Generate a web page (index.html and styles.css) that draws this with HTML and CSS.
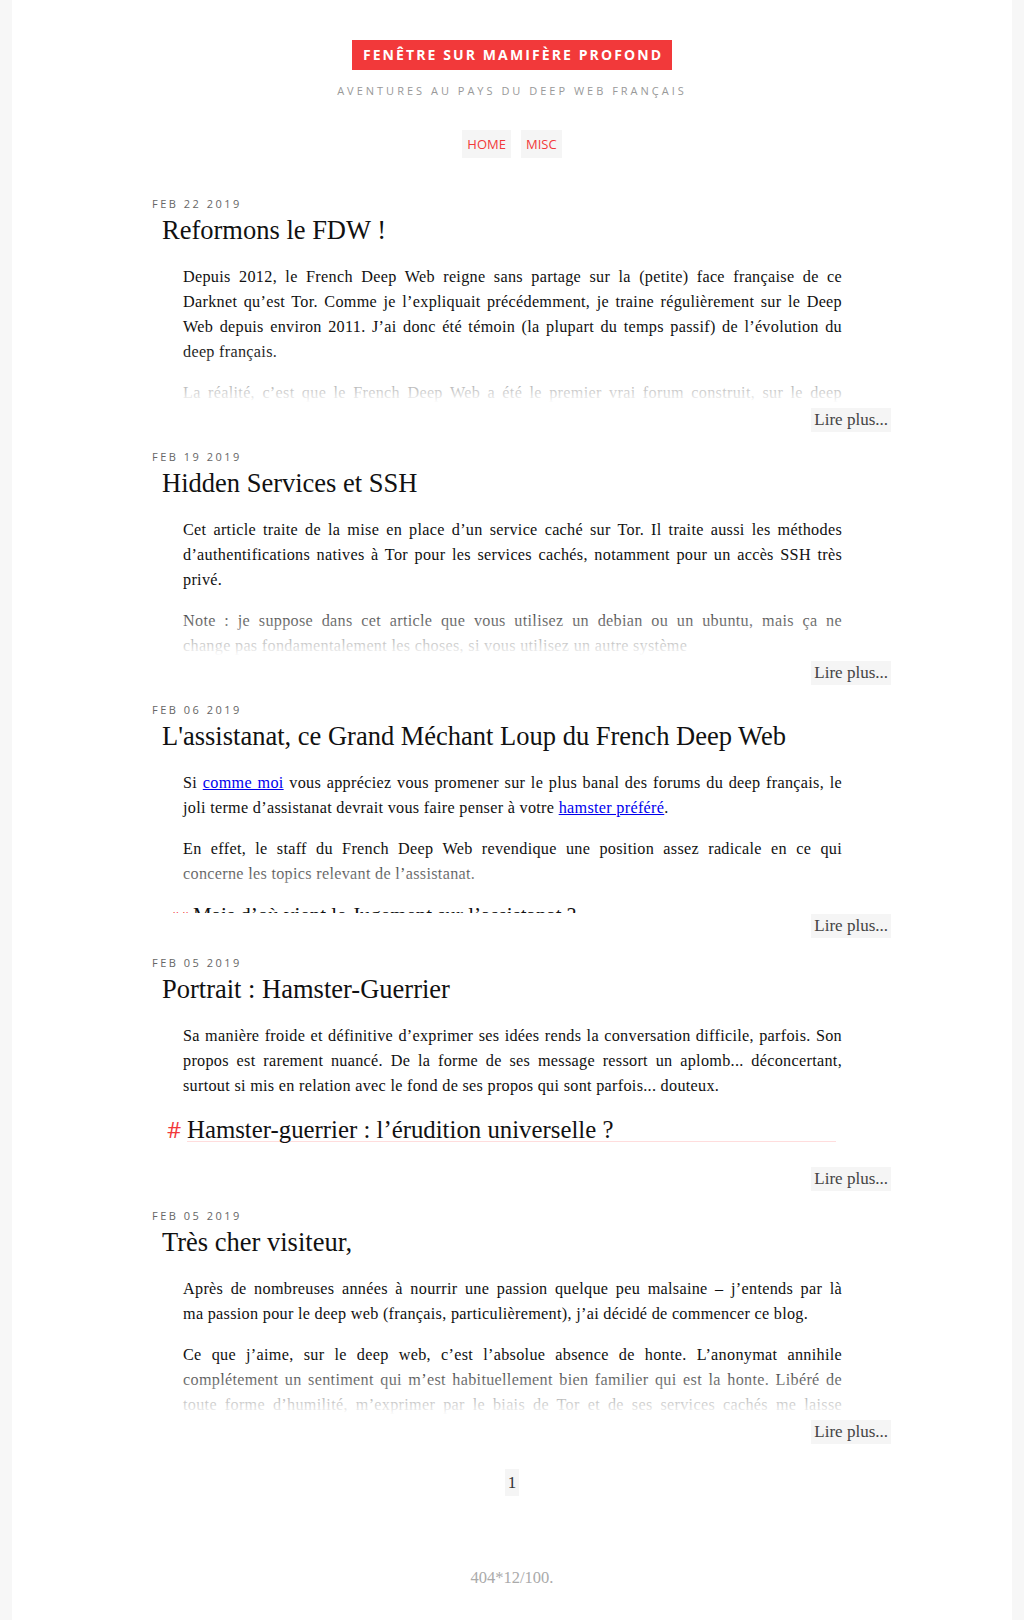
FILE: index.html
```html
<!DOCTYPE html>
<html lang="fr">
<head>
<meta charset="utf-8">
<title>Fenêtre sur Mamifère Profond</title>
<link rel="stylesheet" href="styles.css">
</head>
<body>
<div class="page">
  <header class="site-header">
    <h1 class="site-title"><a href="#">Fenêtre sur Mamifère Profond</a></h1>
    <p class="tagline">Aventures au pays du deep web français</p>
    <nav class="site-nav">
      <a href="#">Home</a>
      <a href="#">Misc</a>
    </nav>
  </header>

  <main class="posts">
    <article class="post">
      <time class="post-date">Feb 22 2019</time>
      <h2 class="post-title">Reformons le FDW !</h2>
      <div class="excerpt">
        <p>
          <span class="ln">Depuis 2012, le French Deep Web reigne sans partage sur la (petite) face française de ce</span>
          <span class="ln">Darknet qu’est Tor. Comme je l’expliquait précédemment, je traine régulièrement sur le Deep</span>
          <span class="ln">Web depuis environ 2011. J’ai donc été témoin (la plupart du temps passif) de l’évolution du</span>
          <span class="ln">deep français.</span>
        </p>
        <p>
          <span class="ln">La réalité, c’est que le French Deep Web a été le premier vrai forum construit, sur le deep</span>
          <span class="ln">web français, à rassembler une communauté réellement active.</span>
        </p>
      </div>
      <div class="read-more-row"><a class="read-more" href="#">Lire plus...</a></div>
    </article>

    <article class="post">
      <time class="post-date">Feb 19 2019</time>
      <h2 class="post-title">Hidden Services et SSH</h2>
      <div class="excerpt">
        <p>
          <span class="ln">Cet article traite de la mise en place d’un service caché sur Tor. Il traite aussi les méthodes</span>
          <span class="ln">d’authentifications natives à Tor pour les services cachés, notamment pour un accès SSH très</span>
          <span class="ln">privé.</span>
        </p>
        <p>
          <span class="ln">Note : je suppose dans cet article que vous utilisez un debian ou un ubuntu, mais ça ne</span>
          <span class="ln">change pas fondamentalement les choses, si vous utilisez un autre système</span>
        </p>
      </div>
      <div class="read-more-row"><a class="read-more" href="#">Lire plus...</a></div>
    </article>

    <article class="post">
      <time class="post-date">Feb 06 2019</time>
      <h2 class="post-title">L'assistanat, ce Grand Méchant Loup du French Deep Web</h2>
      <div class="excerpt">
        <p>
          <span class="ln">Si <a href="#">comme moi</a> vous appréciez vous promener sur le plus banal des forums du deep français, le</span>
          <span class="ln">joli terme d’assistanat devrait vous faire penser à votre <a href="#">hamster préféré</a>.</span>
        </p>
        <p>
          <span class="ln">En effet, le staff du French Deep Web revendique une position assez radicale en ce qui</span>
          <span class="ln">concerne les topics relevant de l’assistanat.</span>
        </p>
        <h3 class="sub-heading">Mais d’où vient le Jugement sur l’assistanat ?</h3>
      </div>
      <div class="read-more-row"><a class="read-more" href="#">Lire plus...</a></div>
    </article>

    <article class="post">
      <time class="post-date">Feb 05 2019</time>
      <h2 class="post-title">Portrait : Hamster-Guerrier</h2>
      <div class="excerpt">
        <p>
          <span class="ln">Sa manière froide et définitive d’exprimer ses idées rends la conversation difficile, parfois. Son</span>
          <span class="ln">propos est rarement nuancé. De la forme de ses message ressort un aplomb... déconcertant,</span>
          <span class="ln">surtout si mis en relation avec le fond de ses propos qui sont parfois... douteux.</span>
        </p>
        <h3 class="main-heading">Hamster-guerrier : l’érudition universelle ?</h3>
      </div>
      <div class="read-more-row"><a class="read-more" href="#">Lire plus...</a></div>
    </article>

    <article class="post">
      <time class="post-date">Feb 05 2019</time>
      <h2 class="post-title">Très cher visiteur,</h2>
      <div class="excerpt">
        <p>
          <span class="ln">Après de nombreuses années à nourrir une passion quelque peu malsaine – j’entends par là</span>
          <span class="ln">ma passion pour le deep web (français, particulièrement), j’ai décidé de commencer ce blog.</span>
        </p>
        <p>
          <span class="ln">Ce que j’aime, sur le deep web, c’est l’absolue absence de honte. L’anonymat annihile</span>
          <span class="ln">complétement un sentiment qui m’est habituellement bien familier qui est la honte. Libéré de</span>
          <span class="ln">toute forme d’humilité, m’exprimer par le biais de Tor et de ses services cachés me laisse</span>
          <span class="ln">une liberté que je ne retrouve nulle part ailleurs.</span>
        </p>
      </div>
      <div class="read-more-row"><a class="read-more" href="#">Lire plus...</a></div>
    </article>
  </main>

  <div class="pagination"><span class="page-num">1</span></div>

  <footer class="site-footer">404*12/100.</footer>
</div>
</body>
</html>
```

FILE: styles.css
```css
html, body {
  margin: 0;
  padding: 0;
}

body {
  background: #f7f7f7;
  font-family: "Liberation Serif", "Times New Roman", serif;
  color: #111;
}

.page {
  width: 1000px;
  min-height: 1620px;
  margin: 0 auto;
  padding-top: 40px;
  box-sizing: border-box;
  background: #fff;
}

/* Header */
.site-header {
  display: flex;
  flex-direction: column;
  align-items: center;
}

.site-title {
  margin: 0;
  background: #f2393a;
  font: 700 14px/30px "Open Sans", sans-serif;
  letter-spacing: 2.1px;
  text-transform: uppercase;
  padding: 0 9px 0 11px;
}

.site-title a {
  color: #fff;
  text-decoration: none;
}

.tagline {
  margin: 13px 0 0;
  font: 400 11px/16px "Open Sans", sans-serif;
  letter-spacing: 3px;
  color: #999;
  text-transform: uppercase;
}

.site-nav {
  margin-top: 31px;
  display: flex;
  gap: 10px;
}

.site-nav a {
  background: #f5f5f5;
  color: #f2393a;
  font: 400 13px/28px "Open Sans", sans-serif;
  padding: 0 5px;
  text-decoration: none;
  text-transform: uppercase;
}

/* Posts */
.posts {
  margin: 36px 121px 0 140px;
}

.post {
  margin-bottom: 15px;
}

.post-date {
  display: block;
  font: 400 11px/18px "Open Sans", sans-serif;
  letter-spacing: 2.5px;
  color: #666;
  text-transform: uppercase;
  padding-top: 1px;
  margin-bottom: -1px;
}

.post-title {
  margin: 3px 0 0 10px;
  font: 400 26.5px/30px "Liberation Serif", "Times New Roman", serif;
  color: #111;
}

.excerpt {
  position: relative;
  margin-top: 20px;
  height: 142px;
  overflow: hidden;
  padding: 0 49px 0 31px;
  font-size: 16.2px;
  letter-spacing: 0.3px;
  line-height: 25px;
  text-align: justify;
  color: #111;
}

/* fade-out veil over the end of the excerpt */
.excerpt::before {
  content: "";
  position: absolute;
  inset: 0;
  background: linear-gradient(to bottom, rgba(255, 255, 255, 0) 59%, #fff 97%);
  pointer-events: none;
}

.excerpt p {
  margin: 0 0 16px;
}

/* one rendered line of the source text, justified edge to edge */
.ln {
  display: block;
  text-align-last: justify;
}

.ln:last-child {
  text-align-last: auto;
}

.excerpt a {
  color: #0000ee;
}

.main-heading {
  position: relative;
  margin: 19px 6px 0 4px;
  font: 400 24.8px/22px "Liberation Serif", "Times New Roman", serif;
  letter-spacing: 0;
  border-bottom: 1px solid #fdd;
  text-align: left;
}

.main-heading::before {
  content: "#";
  display: inline-block;
  width: 20px;
  margin-left: -20px;
  color: #f2393a;
  font: 400 22px/22px "Open Sans", sans-serif;
}

.sub-heading {
  position: relative;
  margin: 16px 0 0 10px;
  font: 400 21px/24px "Liberation Serif", "Times New Roman", serif;
  letter-spacing: 0;
  text-align: left;
}

.sub-heading::before {
  content: "##";
  display: inline-block;
  width: 23px;
  margin-left: -23px;
  color: #f2393a;
  font: 400 15px/24px "Open Sans", sans-serif;
}

.read-more-row {
  margin-top: 1px;
  display: flex;
  justify-content: flex-end;
}

.read-more {
  background: #f5f5f5;
  color: #444;
  font-size: 17px;
  line-height: 24px;
  padding: 0 3px;
  text-decoration: none;
}

/* Pagination + footer */
.pagination {
  margin-top: 25px;
  display: flex;
  justify-content: center;
}

.page-num {
  background: #f5f5f5;
  color: #333;
  font-size: 17px;
  line-height: 27px;
  padding: 0 3px;
}

.site-footer {
  margin-top: 72px;
  text-align: center;
  color: #aaa;
  font-size: 16.5px;
  line-height: 20px;
}
```
